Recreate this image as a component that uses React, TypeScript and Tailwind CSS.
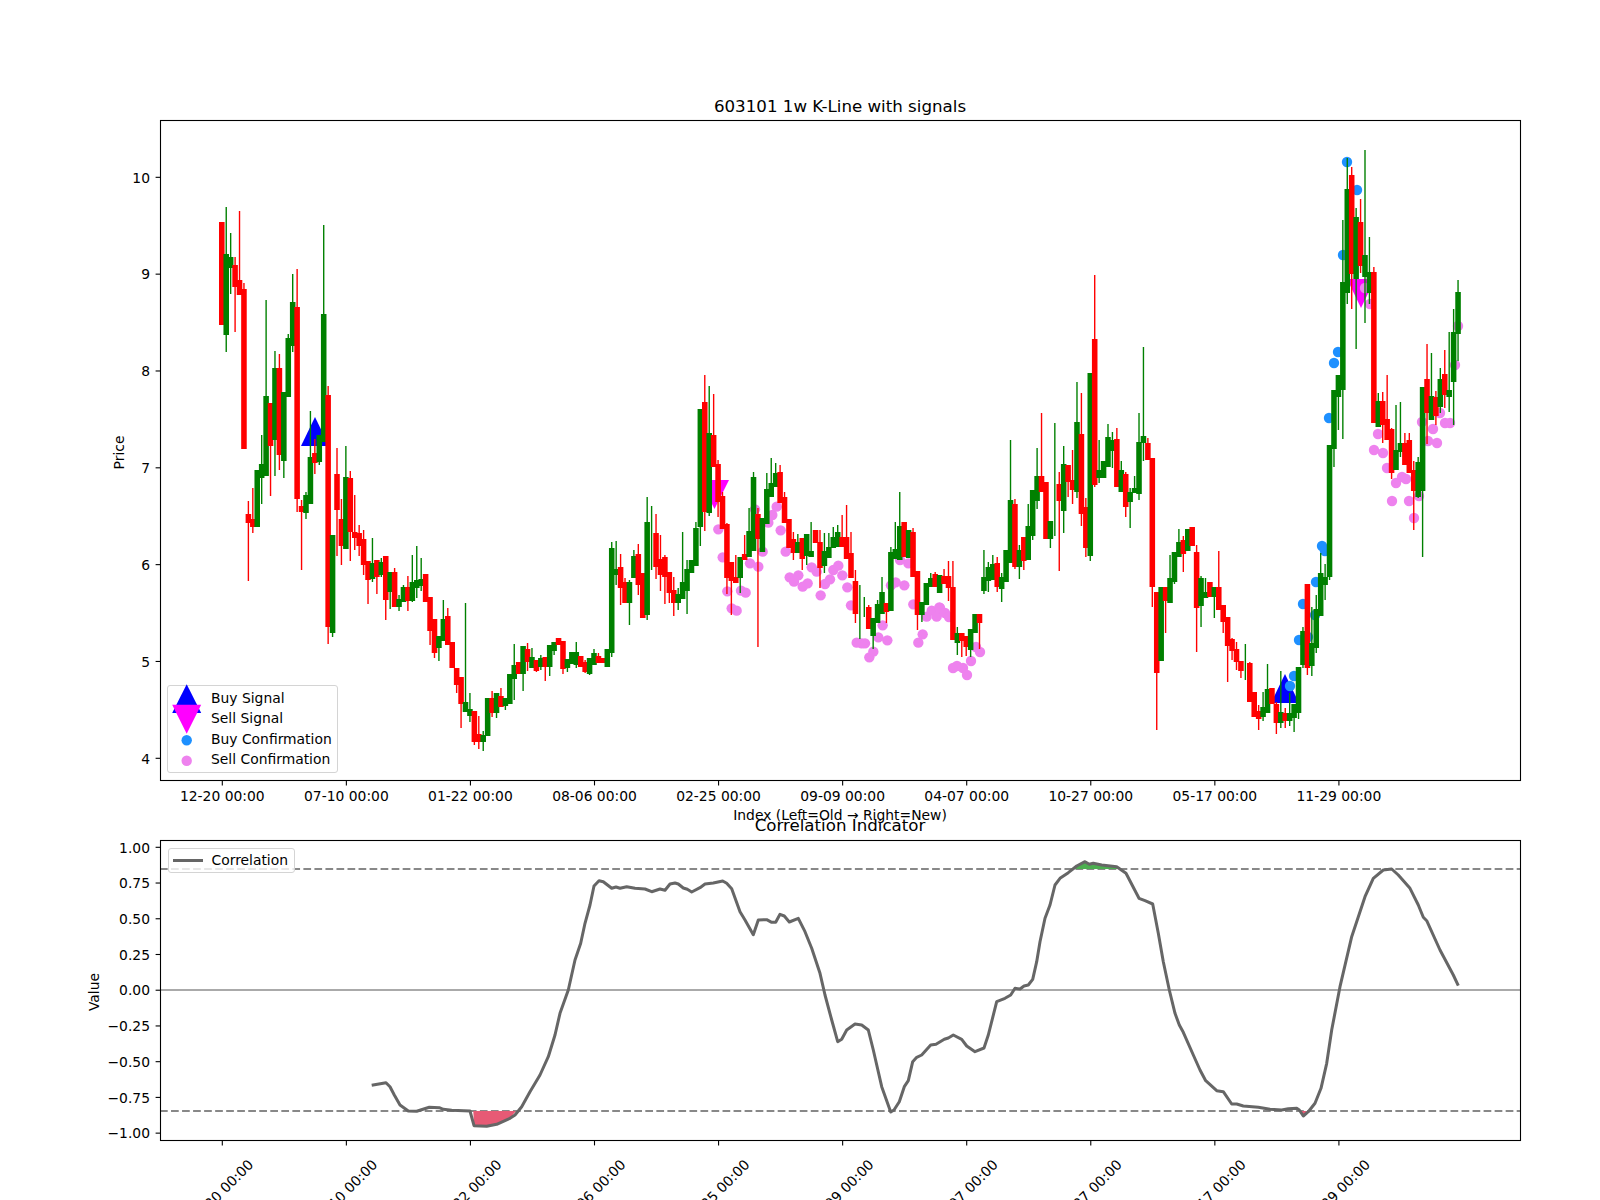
import React from 'react';

// traced from the chart, in page pixels: [red?, bodyTop, bodyBottom, wickTop, wickBottom]
const candles: number[][] = [
  [1,222,325],[0,254,335,207,352],[0,257,268,233,294],[1,265,287,257,332],[1,280,295,211,295],[1,289,449,283,449],
  [1,514,523,501,581],[1,519,527,488,533],[0,470,527],[0,464,478,435,504],[0,396,476,300,476],[1,403,446,403,496],
  [0,368,440,351,476],[1,368,455,354,470],[0,392,461,392,478],[0,338,397,334,397],[0,302,346,274,352],[1,307,499,269,512],
  [1,506,512,500,570],[0,495,513,492,519],[0,457,504,411,504],[1,453,463,439,474],[0,435,462,435,465],[0,314,442,225,442],
  [1,395,627,386,644],[0,535,633,535,637],[1,474,510,448,556],[1,519,546,499,565],[0,477,549,446,549],[1,478,532,471,561],
  [1,532,538,495,550],[1,533,546,525,556],[1,539,565,530,575],[1,561,580,561,604],[0,563,579,538,582],[1,560,577,560,594],
  [0,562,575,558,577],[1,556,600,556,620],[0,572,592,572,609],[1,572,607,568,607],[0,599,607,595,611],[0,587,602,585,602],
  [1,587,601,576,611],[0,582,601,555,602],[0,580,588,546,598],[0,579,586,558,591],[1,574,602],[1,597,631,597,645],
  [1,619,653,619,658],[0,636,648,636,661],[0,619,641,600,641],[1,616,645,608,645],[1,642,668],[1,668,685,668,693],
  [1,677,704,677,728],[0,702,712,603,712],[0,709,716,693,722],[1,711,742,711,745],[1,734,742,716,749],[0,735,742,731,751],
  [0,698,736],[1,698,713,691,717],[0,693,713,693,718],[1,696,707,688,707],[0,698,706,698,710],[0,674,704],
  [0,665,679,644,700],[1,662,674],[0,646,674,646,691],[1,649,662,643,671],[0,657,668,648,668],[1,660,671,660,672],
  [0,658,667,655,670],[1,657,667,657,681],[0,645,667,645,676],[0,642,651,642,655],[1,638,645],[1,641,669,641,674],
  [0,659,668,659,672],[0,652,664],[0,652,665,642,668],[1,656,667],[1,662,672,660,673],[0,658,674,658,675],
  [0,653,665,649,665],[1,656,663,653,663],[1,658,663],[0,649,667],[0,548,653,542,657],[0,569,575,541,585],
  [1,567,588,554,605],[1,582,603,578,603],[0,582,603,580,625],[0,556,578,550,578],[1,554,585,544,595],[1,573,618],
  [0,522,615,497,620],[0,570,570,506,570],[1,533,567,514,579],[1,559,575,535,591],[1,557,577,555,604],[1,572,593,572,603],
  [1,590,603,577,616],[0,594,603,588,610],[0,582,599,532,599],[0,569,591,560,614],[0,560,573],[0,528,566,522,566],
  [0,409,527,409,546],[1,402,512,375,531],[0,433,513,386,516],[1,435,467,394,467],[1,464,502,460,517],[1,496,529,492,529],
  [1,524,578,523,594],[1,562,581,562,615],[1,577,583,555,583],[0,557,578,557,593],[1,554,560,535,560],[0,531,557,508,557],
  [0,477,551,472,551],[1,514,539,508,647],[0,518,552],[0,489,524,473,524],[0,483,497,458,497],[0,473,487,463,487],
  [1,472,503,465,503],[1,497,523,492,523],[1,519,548],[1,539,553,532,560],[0,542,553,534,553],[1,538,559,538,570],
  [0,534,556,534,565],[0,551,557,522,557],[1,530,543],[1,542,568,530,588],[0,551,566,533,573],[0,547,558,533,558],
  [0,537,548,527,548],[0,532,547,525,547],[1,537,547,515,547],[1,537,559,505,559],[1,553,578,532,578],[1,581,614,570,623],
  [0,610,610,585,639],[0,607,607,597,617],[1,607,629,605,629],[0,618,636,618,649],[0,604,623,600,623],[0,592,614,577,614],
  [1,603,612,603,623],[0,552,611,547,611],[0,549,559,522,559],[0,526,560,492,560],[1,522,557],[0,530,558],
  [1,532,577,528,577],[1,571,615,571,630],[0,602,615,602,622],[0,583,605],[0,578,587,573,587],[1,574,587,572,587],
  [0,575,593],[1,576,584,569,584],[1,576,588,561,601],[1,587,640,561,640],[0,633,643,627,655],[1,633,641,633,657],
  [1,636,647,636,656],[0,629,650,629,657],[0,614,633],[1,614,623,614,649],[0,577,591,550,594],[0,567,581,562,592],
  [0,564,580,555,580],[1,563,587,557,592],[0,577,589,573,602],[0,550,582],[0,500,563,440,563],[1,504,567,499,569],
  [0,550,567,545,579],[1,537,561,537,570],[0,526,560,504,560],[0,490,536,490,540],[0,476,501,448,509],[1,476,492,413,492],
  [1,482,539],[0,521,539,521,548],[0,480,480,423,536],[1,484,501,472,571],[0,464,511,446,533],[1,465,482,465,497],
  [1,480,490,450,504],[0,422,492,382,498],[1,434,514,393,526],[1,507,548,498,557],[0,373,556,373,561],[1,339,485,275,487],
  [0,470,478,440,483],[0,461,478],[0,437,467,424,467],[0,440,451,432,468],[1,439,487,428,487],[0,470,492,461,492],
  [1,474,507,472,517],[0,492,502,488,528],[0,488,493,476,493],[0,442,494,413,500],[0,436,443,347,461],[1,443,460,438,460],
  [1,458,587,458,607],[1,592,673,592,730],[0,587,661],[1,587,601,587,633],[0,578,603,555,603],[0,552,582,552,584],
  [0,542,557,529,557],[1,540,554,536,572],[0,529,551],[1,527,546],[1,552,608,545,652],[0,578,606,576,627],
  [0,592,598,578,598],[1,582,597],[0,587,597,587,618],[1,587,610,551,610],[1,605,622,605,633],[1,617,646,617,682],
  [1,639,651,638,660],[1,649,662,642,670],[1,661,671,661,678],[0,670,670,644,680],[1,663,702,662,702],[1,692,717],
  [1,711,719,705,730],[0,707,717,692,721],[0,689,713,664,713],[1,688,704],[1,704,723,702,734],[0,712,723,671,728],
  [1,713,721,708,728],[0,713,721,693,726],[0,704,718,704,732],[0,667,713,667,719],[0,631,665,627,668],[1,584,668,584,675],
  [0,643,666,607,676],[0,609,648,595,653],[0,573,616,553,616],[0,577,585,564,600],[0,445,577,445,580],[0,390,449,390,467],
  [0,375,397,375,430],[0,282,390,220,439],[0,189,293,158,304],[1,175,274,167,309],[0,217,279,208,349],[1,222,266,199,273],
  [0,255,277,150,323],[0,272,293,237,304],[1,272,423,267,423],[0,401,427,393,427],[1,401,425,392,443],[1,419,440,375,440],
  [1,429,473,428,479],[0,450,470,405,470],[0,443,452,402,457],[1,443,465,433,465],[1,440,473,433,473],[1,470,491,461,530],
  [0,462,497,457,498],[0,387,491,387,557],[1,379,413,344,444],[0,396,420,353,420],[1,397,416,391,425],[0,379,407,368,413],
  [1,374,395,350,408],[0,390,397,332,412],[0,332,382,309,425],[0,292,334,280,361],
];

const candleX = (i: number) => 221.8 + 4.431 * i;

const z4 = (p: number[][]) => p.map(([x, y]) => [540 + x / 3, 360 + y / 3]);
const sellDots = [
  ...z4([[535,508],[548,592],[562,694],[575,745],[590,752],[603,692],[617,698],[630,610],[655,620],[668,575],[645,448],[685,488],[697,465],[710,440],[722,511],[737,575],[749,652],[762,665],[775,646],[788,680],[803,670],[815,622],[830,635],[842,706],[855,672],[870,658],[880,630],[895,617],[907,646],[922,682],[933,736],[950,848],[965,850],[975,850],[988,892],[1000,875],[1015,832],[1028,796],[1042,841],[1053,676],[1067,667],[1080,600],[1093,676],[1105,610],[1120,733],[1135,848],[1148,823],[1160,770],[1175,752],[1190,770],[1198,742]]),
  [940,608],[945,613],[949,617],[953,668],[957,666],[963,668],[967,675],[971,661],[976,647],[980,652],
  [1378,434],[1374,450],[1383,453],[1387,468],[1402,477],[1406,479],[1396,483],[1392,501],[1409,501],[1414,518],[1419,496],[1428,441],[1433,429],[1437,443],[1422,422],[1445,423],[1450,423],[1440,413],[1455,365],[1458,326],[1365,288],[1370,304],
];
const buyDots = [
  [1347,162],[1357,190],[1343,255],[1338,352],[1334,363],[1329,418],[1322,546],[1325,551],[1316,582],[1303,604],[1315,615],[1299,640],[1308,637],[1294,676],[1290,686],
];

const xLabels = ['12-20 00:00','07-10 00:00','01-22 00:00','08-06 00:00','02-25 00:00','09-09 00:00','04-07 00:00','10-27 00:00','05-17 00:00','11-29 00:00'];
const xTicks = xLabels.map((label, i) => ({ label, x: candleX(i * 28) + 0.5 }));
const priceTicks = [4, 5, 6, 7, 8, 9, 10].map((p) => ({ label: String(p), y: 758.3 - (p - 4) * 96.83 }));
const valueTicks = ['1.00','0.75','0.50','0.25','0.00','−0.25','−0.50','−0.75','−1.00'].map((label, i) => ({ label, y: 847.3 + i * 35.73 }));

// correlation line, traced from three crops
const corrLeft = [[935,766],[978,758],[990,770],[1003,795],[1020,825],[1045,843],[1070,844],[1108,832],[1138,833],[1150,838],[1175,841],[1230,843],[1242,887],[1280,889],[1310,883],[1350,865],[1365,855],[1385,830],[1410,785],[1440,735],[1465,680],[1485,615],[1500,550]];
const corrMid = [[85,480],[105,390],[122,340],[135,280],[150,225],[162,168],[177,152],[190,155],[215,175],[228,171],[240,175],[260,170],[285,175],[315,177],[335,185],[360,177],[375,181],[390,162],[405,159],[415,162],[430,174],[442,178],[455,186],[480,173],[495,162],[520,159],[548,153],[560,160],[575,176],[600,245],[615,270],[640,314],[655,270],[680,269],[695,277],[707,277],[720,253],[733,258],[748,276],[775,265],[795,305],[815,355],[840,430],[855,495],[875,570],[893,635],[905,628],[920,600],[945,582],[965,585],[985,600],[1000,660],[1025,770],[1052,846],[1062,840],[1078,815],[1093,770],[1105,752],[1118,695],[1130,682],[1145,675],[1172,645],[1188,643],[1213,628],[1225,624],[1240,615],[1265,628],[1280,648],[1305,665],[1332,654],[1345,615],[1370,515],[1395,505],[1412,495],[1425,475],[1440,477],[1452,468],[1465,465],[1478,448],[1490,395],[1500,335]];
const corrRight = [[45,265],[60,225],[75,165],[90,145],[115,128],[140,108],[165,95],[178,103],[190,100],[215,105],[260,110],[288,130],[327,205],[345,212],[368,222],[385,310],[400,395],[418,480],[435,550],[448,585],[460,607],[490,675],[510,720],[527,752],[560,782],[580,785],[605,822],[620,822],[640,828],[685,832],[720,838],[755,840],[775,836],[800,835],[808,840],[820,858],[835,845],[855,820],[873,775],[890,700],[905,600],[930,470],[965,320],[1005,200],[1030,145],[1060,120],[1085,117],[1105,135],[1140,175],[1165,225],[1180,262],[1190,272],[1230,360],[1270,435],[1285,467]];
const toPts = (p: number[][], ox: number) => p.map(([x, y]) => `${(ox + x / 3).toFixed(1)},${(830 + y / 3).toFixed(1)}`).join(' ');
const corrPoints = [toPts(corrLeft, 60), toPts(corrMid, 540), toPts(corrRight, 1030)].join(' ');

function XAxisTicks({ y }: { y: number }) {
  return (
    <>
      {xTicks.map((t) => (
        <line key={t.label} x1={t.x} x2={t.x} y1={y} y2={y + 4.9} stroke="black" strokeWidth={1.1} />
      ))}
    </>
  );
}

function YAxis({ ticks }: { ticks: { label: string; y: number }[] }) {
  return (
    <>
      {ticks.map((t) => (
        <g key={t.label}>
          <line x1={155.6} x2={160.5} y1={t.y} y2={t.y} stroke="black" strokeWidth={1.1} />
          <text x={150} y={t.y + 5.2} textAnchor="end">{t.label}</text>
        </g>
      ))}
    </>
  );
}

function PricePanel() {
  return (
    <div className="relative h-[810px]">
      <svg width={1600} height={810} viewBox="0 0 1600 810" className="block overflow-visible text-[13.89px]">
        <text x={840} y={112} textAnchor="middle" className="text-[16.67px]">603101 1w K-Line with signals</text>
        <polygon points="301,446 329,446 315,417" fill="#0000ff" />
        <polygon points="1271,703 1299,703 1285,674" fill="#0000ff" />
        <polygon points="700,480 729,480 714.5,509" fill="#ff00ff" />
        <polygon points="1347,279 1375,279 1361,308" fill="#ff00ff" />
        {sellDots.map(([x, y], i) => <circle key={i} cx={x} cy={y} r={5.2} fill="#ee82ee" />)}
        {buyDots.map(([x, y], i) => <circle key={i} cx={x} cy={y} r={5.2} fill="#1e90ff" />)}
        {candles.map(([red, top, bottom, wickTop, wickBottom], i) => {
          const x = candleX(i);
          const color = red ? '#ff0000' : '#008000';
          return (
            <g key={i}>
              <line x1={x} x2={x} y1={wickTop ?? top} y2={wickBottom ?? bottom} stroke={color} strokeWidth={1.39} />
              {bottom > top && <line x1={x} x2={x} y1={top} y2={bottom} stroke={color} strokeWidth={5.56} />}
            </g>
          );
        })}
        <rect x={160.5} y={120.5} width={1360} height={660} fill="none" stroke="black" strokeWidth={1.1} />
        <YAxis ticks={priceTicks} />
        <XAxisTicks y={780.5} />
        {xTicks.map((t) => (
          <text key={t.label} x={t.x} y={801} textAnchor="middle">{t.label}</text>
        ))}
        <text x={840} y={820} textAnchor="middle">Index (Left=Old → Right=New)</text>
        <text transform="translate(124 452.5) rotate(-90)" textAnchor="middle">Price</text>
      </svg>
      <div className="absolute left-[167px] top-[685px] w-[171px] h-[88px] bg-white/80 border border-[#d4d4d4] rounded-[3px] flex flex-col pt-[1.5px] text-[13.89px] leading-[20.5px]">
        <LegendRow label="Buy Signal">
          <polygon points="4.2,25 33.2,25 18.7,-3.75" fill="#0000ff" />
        </LegendRow>
        <LegendRow label="Sell Signal">
          <polygon points="4.2,-3.25 33.2,-3.25 18.7,25.75" fill="#ff00ff" />
        </LegendRow>
        <LegendRow label="Buy Confirmation">
          <circle cx={18.7} cy={11.25} r={5.2} fill="#1e90ff" />
        </LegendRow>
        <LegendRow label="Sell Confirmation">
          <circle cx={18.7} cy={11.75} r={5.2} fill="#ee82ee" />
        </LegendRow>
      </div>
    </div>
  );
}

function LegendRow({ label, children }: { label: string; children: React.ReactNode }) {
  return (
    <div className="flex h-[20.5px] items-center">
      <svg width={43} height={20} className="shrink-0 overflow-visible">{children}</svg>
      <span className="whitespace-nowrap">{label}</span>
    </div>
  );
}

function CorrelationPanel() {
  return (
    <div className="relative h-[390px]">
      <svg width={1600} height={390} viewBox="0 810 1600 390" className="block overflow-visible text-[13.89px]">
        <text x={840} y={831} textAnchor="middle" className="text-[16.67px]">Correlation Indicator</text>
        <line x1={160} x2={1520} y1={990} y2={990} stroke="#aaaaaa" strokeWidth={2} />
        <line x1={160} x2={1520} y1={869} y2={869} stroke="#888888" strokeWidth={2.08} strokeDasharray="7.7 3.33" />
        <line x1={160} x2={1520} y1={1111} y2={1111} stroke="#888888" strokeWidth={2.08} strokeDasharray="7.7 3.33" />
        <polygon points="473.3,1111 474,1125.7 486.7,1126.3 496.7,1124.3 510,1118.3 516,1111" fill="#e75a75" />
        <polygon points="1075,869 1076.7,866 1085,861.7 1089.3,864.3 1093.3,863.3 1101.7,865 1117,866.7 1119,869" fill="#4caf50" />
        <polygon points="1300,1111 1303.3,1116 1307,1111" fill="#e75a75" />
        <polyline points={corrPoints} fill="none" stroke="#666666" strokeWidth={3} strokeLinejoin="round" />
        <rect x={160.5} y={840.5} width={1360} height={300} fill="none" stroke="black" strokeWidth={1.1} />
        <YAxis ticks={valueTicks} />
        <XAxisTicks y={1140.5} />
        {xTicks.map((t) => (
          <text key={t.label} x={t.x - 1.5} y={1192} dy={5} textAnchor="middle" transform={`rotate(-45 ${t.x - 1.5} 1192)`}>{t.label}</text>
        ))}
        <text transform="translate(99 992) rotate(-90)" textAnchor="middle">Value</text>
      </svg>
      <div className="absolute left-[167.5px] top-[37.5px] w-[127px] h-[25px] bg-white/80 border border-[#d4d4d4] rounded-[3px] flex items-center text-[13.89px]">
        <span className="ml-[4px] mr-[9px] w-[30px] h-[3px] bg-[#666666]" />
        <span>Correlation</span>
      </div>
    </div>
  );
}

export default function App() {
  return (
    <div className="w-[1600px] h-[1200px] overflow-hidden bg-white text-black font-['DejaVu_Sans',sans-serif]">
      <PricePanel />
      <CorrelationPanel />
    </div>
  );
}
